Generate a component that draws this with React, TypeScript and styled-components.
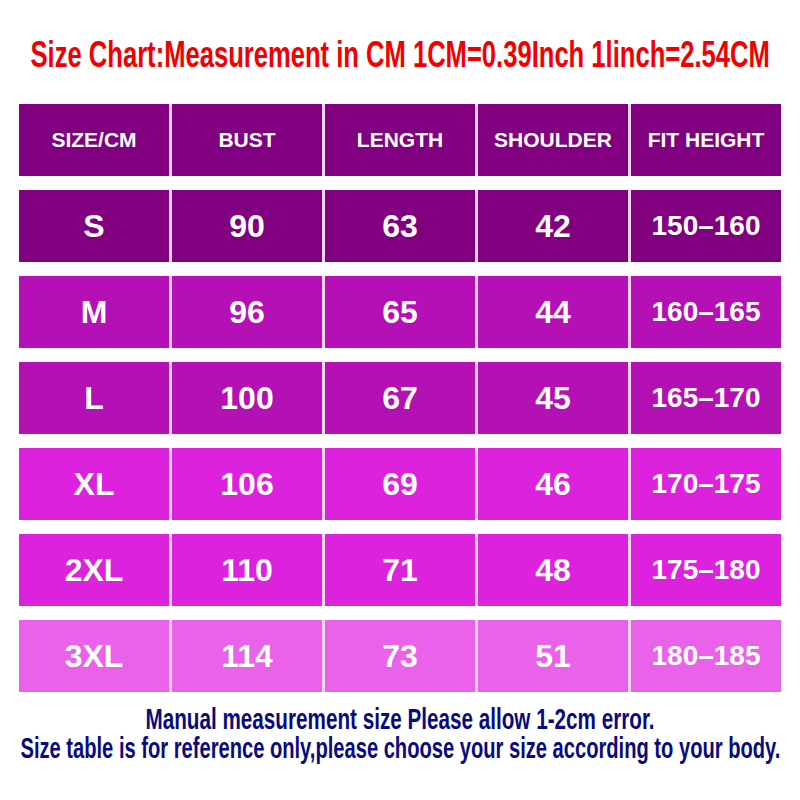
import React, { useLayoutEffect, useRef, useState } from "react";
import styled, { createGlobalStyle } from "styled-components";

const GlobalStyle = createGlobalStyle`
  html, body {
    margin: 0;
    padding: 0;
    background: #ffffff;
  }
`;

const Page = styled.div`
  width: 800px;
  height: 800px;
  overflow: hidden;
  display: flex;
  flex-direction: column;
  align-items: center;
  font-family: "Liberation Sans", Arial, sans-serif;
`;

const Title = styled.h1`
  margin: 34px 0 0;
  font-weight: 700;
  font-size: 36px;
  line-height: 42px;
  color: #f00000;
  white-space: nowrap;
`;

const Table = styled.div`
  width: 762px;
  margin-top: 28px;
  display: flex;
  flex-direction: column;
  gap: 14px;
`;

const Row = styled.div`
  display: grid;
  grid-template-columns: repeat(5, 1fr);
  gap: 3px;
  height: 72px;
  background: #f2d6f2;
`;

const Cell = styled.div<{ $bg: string; $size: number }>`
  background: ${(p) => p.$bg};
  color: #ffffff;
  font-weight: 700;
  font-size: ${(p) => p.$size}px;
  display: flex;
  align-items: center;
  justify-content: center;
  white-space: nowrap;
`;

const Footer = styled.div`
  margin-top: 13px;
  display: flex;
  flex-direction: column;
  align-items: center;
  font-weight: 700;
  font-size: 29px;
  line-height: 29px;
  color: #0a0a80;
  white-space: nowrap;
`;

// condensed lettering: squeeze the text to the width it takes in the picture
const Squeeze = styled.span`
  display: inline-block;
  transform-origin: center;
  white-space: nowrap;
`;

function Narrow({ width, children }: { width: number; children: React.ReactNode }) {
  const ref = useRef<HTMLSpanElement>(null);
  const [scale, setScale] = useState(1);
  useLayoutEffect(() => {
    if (ref.current) setScale(width / ref.current.offsetWidth);
  }, [width]);
  return (
    <Squeeze ref={ref} style={{ transform: `scaleX(${scale})` }}>
      {children}
    </Squeeze>
  );
}

const header = ["SIZE/CM", "BUST", "LENGTH", "SHOULDER", "FIT HEIGHT"];

const rows: { bg: string; cells: string[] }[] = [
  { bg: "#800080", cells: ["S", "90", "63", "42", "150–160"] },
  { bg: "#b410b5", cells: ["M", "96", "65", "44", "160–165"] },
  { bg: "#b411b5", cells: ["L", "100", "67", "45", "165–170"] },
  { bg: "#dd22dd", cells: ["XL", "106", "69", "46", "170–175"] },
  { bg: "#dd22dd", cells: ["2XL", "110", "71", "48", "175–180"] },
  { bg: "#ea62ea", cells: ["3XL", "114", "73", "51", "180–185"] },
];

export default function App() {
  return (
    <Page>
      <GlobalStyle />
      <Title>
        <Narrow width={739}>Size Chart:Measurement in CM 1CM=0.39Inch 1linch=2.54CM</Narrow>
      </Title>
      <Table>
        <Row>
          {header.map((h) => (
            <Cell key={h} $bg="#800080" $size={21}>
              {h}
            </Cell>
          ))}
        </Row>
        {rows.map((r) => (
          <Row key={r.cells[0]}>
            {r.cells.map((c, i) => (
              <Cell key={i} $bg={r.bg} $size={i === 4 ? 28 : 32}>
                {c}
              </Cell>
            ))}
          </Row>
        ))}
      </Table>
      <Footer>
        <Narrow width={509}>Manual measurement size Please allow 1-2cm error.</Narrow>
        <Narrow width={760}>
          Size table is for reference only,please choose your size according to your body.
        </Narrow>
      </Footer>
    </Page>
  );
}
